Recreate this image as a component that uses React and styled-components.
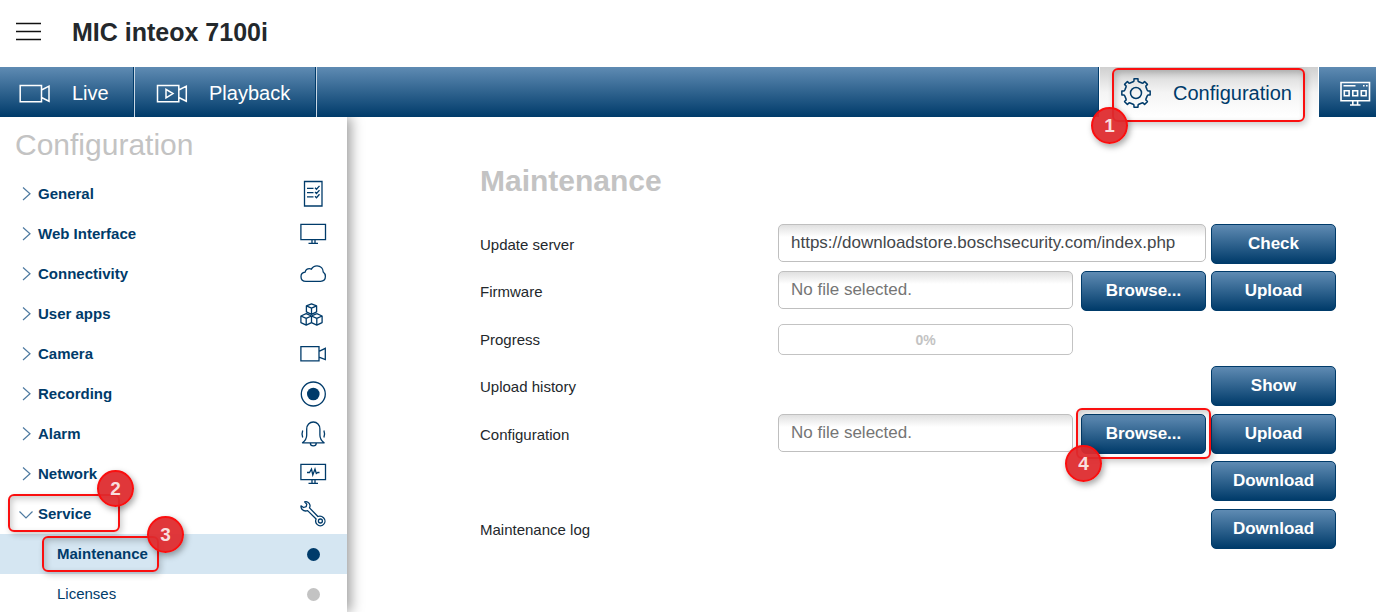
import React from "react";
import styled, { createGlobalStyle, css } from "styled-components";

const NAVY = "#003b6a";
const BLUE_FADE = "linear-gradient(#5f8bb3, #003b6a)";
const MUTED = "#c3c3c3";
const RED = "#fa0f0f";

const GlobalStyle = createGlobalStyle`
  *, *::before, *::after { box-sizing: border-box; }
  body {
    margin: 0;
    background: #fff;
    color: #23282c;
    font-family: "Liberation Sans", Arial, sans-serif;
    font-size: 15px;
  }
  button, input { font-family: inherit; }
`;

const Page = styled.div`
  display: flex;
  flex-direction: column;
  height: 100vh;
  overflow: hidden;
`;

const Header = styled.header`
  flex: none;
  display: flex;
  align-items: center;
  gap: 29px;
  height: 67px;
  padding: 0 15px 3px;
`;

const MenuToggle = styled.button`
  display: flex;
  padding: 0;
  border: 0;
  background: none;
  color: #111;
`;

const DeviceName = styled.h1`
  margin: 0;
  font-size: 25px;
  line-height: 30px;
`;

const NavBar = styled.nav`
  position: relative;
  z-index: 2;
  flex: none;
  display: flex;
  height: 50px;
  background: ${BLUE_FADE};
`;

const Tab = styled.a`
  position: relative;
  flex: none;
  display: flex;
  align-items: center;
  gap: 21px;
  width: ${(p) => p.$width}px;
  padding-left: ${(p) => p.$start}px;
  color: #fff;
  font-size: 20px;
  line-height: 24px;
  text-decoration: none;
  ${(p) =>
    p.$divider &&
    css`
      border-right: 1px solid #c9d8e6;
      box-shadow: inset -1px 0 ${NAVY};
    `}
  ${(p) =>
    p.$active &&
    css`
      background: linear-gradient(#d0d0d0, #f4f4f4 50%, #fff);
      border-left: 1px solid #fff;
      border-right: 1px solid #fff;
      color: ${NAVY};
    `}
`;

const TabText = styled.span`
  padding-top: 2px;
`;

const NavFill = styled.div`
  flex: 1;
  box-shadow: inset -1px 0 ${NAVY};
`;

const Body = styled.div`
  flex: 1;
  display: flex;
  min-height: 0;
`;

const Sidebar = styled.aside`
  position: relative;
  z-index: 1;
  flex: none;
  width: 347px;
  background: #fff;
  box-shadow: 4px 0 12px rgba(0, 0, 0, 0.38);
`;

const SidebarTitle = styled.h2`
  margin: 0;
  padding: 10px 15px 11px;
  color: ${MUTED};
  font-size: 30px;
  font-weight: 400;
  line-height: 36px;
`;

const Menu = styled.ul`
  margin: 0;
  padding: 0;
  list-style: none;
`;

const MenuItem = styled.li`
  position: relative;
`;

const rowStyle = css`
  display: flex;
  align-items: center;
  width: 100%;
  height: 40px;
  border: 0;
  color: ${NAVY};
  font-size: 15px;
  line-height: 20px;
  text-align: left;
  text-decoration: none;
`;

const SectionButton = styled.button`
  ${rowStyle}
  gap: 5px;
  padding: 0 20px 0 19px;
  background: none;
  font-weight: 700;
`;

const PageLink = styled.a`
  ${rowStyle}
  padding: 0 27px 0 57px;
  background: ${(p) => (p.$current ? "#d5e6f2" : "transparent")};
  font-weight: ${(p) => (p.$current ? 700 : 400)};
`;

const RowText = styled.span`
  flex: 1;
`;

const Dot = styled.span`
  width: 13px;
  height: 13px;
  border-radius: 50%;
  background: ${(p) => (p.$current ? NAVY : MUTED)};
`;

const Main = styled.main`
  flex: 1;
  min-width: 0;
  padding: 46px 40px 0 133px;
`;

const PageTitle = styled.h2`
  margin: 0 0 25px;
  color: ${MUTED};
  font-size: 30px;
  line-height: 36px;
`;

const Form = styled.form`
  display: flex;
  flex-direction: column;
`;

const FormRow = styled.div`
  display: grid;
  grid-template-columns: 298px minmax(0, 1fr) 125px;
  align-items: center;
  height: 40px;
  margin-bottom: 7px;
  &:nth-child(even) {
    margin-bottom: 8px;
  }
`;

const Label = styled.label`
  grid-column: 1;
  padding-top: 2px;
  line-height: 20px;
`;

const FieldGroup = styled.div`
  grid-column: 2;
  align-self: stretch;
  display: flex;
  align-items: flex-start;
  gap: 8px;
  padding-right: 5px;
`;

const TextInput = styled.input`
  flex: 1;
  min-width: 0;
  height: 38px;
  padding: 0 12px 1px;
  border: 1px solid #bfbfbf;
  border-radius: 5px;
  background: linear-gradient(#e0e0e0, #fff 12px);
  color: #43474b;
  font-size: 17px;
  &::placeholder {
    color: #757575;
    opacity: 1;
  }
`;

const ProgressTrack = styled.div`
  flex: 1;
  align-self: center;
  height: 31px;
  margin-right: 133px;
  border: 1px solid ${MUTED};
  border-radius: 5px;
  color: ${MUTED};
  font-size: 14px;
  font-weight: 700;
  line-height: 31px;
  text-align: center;
`;

const ActionButton = styled.button`
  width: 125px;
  height: 40px;
  padding: 0 0 1px;
  border: 1px solid ${NAVY};
  border-radius: 5px;
  background: ${BLUE_FADE};
  color: #fff;
  font-size: 17px;
  font-weight: 700;
`;

const ActionCell = styled.div`
  grid-column: 3;
`;

const Anchor = styled.div`
  position: relative;
  flex: none;
`;

const CalloutFrame = styled.span`
  position: absolute;
  z-index: 3;
  left: ${(p) => p.$left}px;
  top: ${(p) => p.$top}px;
  width: ${(p) => p.$width}px;
  height: ${(p) => p.$height}px;
  border: 2px solid ${RED};
  border-radius: 6px;
  box-shadow: 2px 3px 6px rgba(0, 0, 0, 0.2), inset 2px 3px 6px rgba(0, 0, 0, 0.2);
  pointer-events: none;
`;

const CalloutBadge = styled.span`
  position: absolute;
  left: ${(p) => p.$x}px;
  top: ${(p) => p.$y}px;
  width: 37px;
  height: 37px;
  border: 2px solid ${RED};
  border-radius: 50%;
  background: rgba(222, 42, 46, 0.94);
  box-shadow: 2px 3px 6px rgba(0, 0, 0, 0.35);
  color: #f9dede;
  font-size: 19px;
  font-weight: 700;
  line-height: 33px;
  text-align: center;
`;

function Callout({ number, box, badge }) {
  const [left, top, width, height] = box;
  return (
    <CalloutFrame $left={left} $top={top} $width={width} $height={height}>
      <CalloutBadge $x={badge[0]} $y={badge[1]}>
        {number}
      </CalloutBadge>
    </CalloutFrame>
  );
}

function Icon({ size = 28, width = 1.3, children }) {
  return (
    <svg
      width={size}
      height={size}
      viewBox={`0 0 ${size} ${size}`}
      fill="none"
      stroke="currentColor"
      strokeWidth={width}
      aria-hidden="true"
    >
      {children}
    </svg>
  );
}

function gearPath(cx, cy) {
  const points = [];
  for (let i = 0; i < 8; i += 1) {
    [
      [-14.5, 11.6],
      [-10, 12],
      [-8, 14.3],
      [8, 14.3],
      [10, 12],
      [14.5, 11.6],
    ].forEach(([offset, radius]) => {
      const a = ((i * 45 + offset - 90) * Math.PI) / 180;
      points.push(`${(cx + radius * Math.cos(a)).toFixed(2)} ${(cy + radius * Math.sin(a)).toFixed(2)}`);
    });
  }
  return `M${points.join("L")}Z`;
}

const GearIcon = () => (
  <Icon size={32} width={1.5}>
    <path d={gearPath(16, 17)} strokeLinejoin="round" />
    <circle cx="16" cy="17" r="5.5" />
  </Icon>
);

const LiveIcon = () => (
  <Icon size={32} width={1.5}>
    <path d="M1.2 9.5h21.3v16.3H1.2zM22.5 14l7.5-3.8v15L22.5 21.5" />
  </Icon>
);

const PlaybackIcon = () => (
  <Icon size={32} width={1.5}>
    <path d="M1.5 9.5h21.3v16.3H1.5zM22.8 14l7.5-3.8v15L22.8 21.5M10 13.3v8.6l7-4.3z" />
  </Icon>
);

const DashboardIcon = () => (
  <Icon size={32} width={1.6}>
    <path d="M2 6.5h28.5v18.3H2zM4.5 9.8h12M24 9.8h1.6M27 9.8h1.6M5.3 14.8h4.8v5H5.3zM13.8 14.8h4.8v5h-4.8zM22.3 14.8h4.8v5h-4.8zM13.8 25v3.5M18.6 25v3.5M11 29h10.5" />
  </Icon>
);

const ICONS = {
  list: (
    <>
      <path d="M5.5 1.5h17.5v24.5H5.5z" />
      <path d="M8 8.4h6.500M8 12.600h6.500M8 16.800h6.500M16 7.800l1.500 1.500 3-3.400M16 12l1.500 1.500 3-3.400M16 16.200l1.500 1.500 3-3.400" />
    </>
  ),
  monitor: <path d="M1.900 4.300h24.600v15.400H1.900zM13 20v3M16 20v3M9.500 23.300h9.500" />,
  cloud: (
    <path d="M7 21.300C3.800 21.300 2 19.300 2 16.700c0-2.300 1.800-4.200 4.100-4.500C6.600 9.900 8.300 8.600 10.400 8.600c.8 0 1.400.2 2 .5C13.500 7 15.600 5.800 18 5.800c3.700 0 6.300 2.700 6.200 6.200 1.400 1 2.200 2.500 2.200 4.300 0 3-2 5-4.800 5z" />
  ),
  cubes: (
    <path
      strokeLinejoin="round"
      d="M12.500 3.800l5.100 2.100v6l-5.100 2.400-5.100-2.400v-6zM7.400 5.900l5.100 2.300 5.100-2.300M12.500 8.200v6M7.200 13.700l5.300 2.300v6.600l-5.300 2.600-5.300-2.600V16zM1.900 16l5.300 2.400 5.300-2.400M7.200 18.400v6.800M17.800 13.700l5.300 2.300v6.600l-5.300 2.600-5.300-2.600M12.500 16l5.300-2.300M12.500 16l5.300 2.400 5.300-2.400M17.800 18.400v6.800"
    />
  ),
  camera: <path d="M1.900 6.700h18.100v14.200H1.900zM20 11.400l6.300-3v11.200l-6.300-2.500" />,
  record: (
    <>
      <circle cx="14.300" cy="14" r="12" />
      <circle cx="14.300" cy="14" r="6.300" fill="currentColor" stroke="none" />
    </>
  ),
  bell: (
    <path
      strokeLinejoin="round"
      d="M3.500 22.800c2.600-2 4.200-4.500 4.200-7.800V9c0-4 2.800-7 6.600-7s6.600 3 6.600 7v6c0 3.300 1.600 5.800 4.200 7.800zM11.300 23c0 1.700 1.300 2.900 3 2.900s3-1.200 3-2.900M3.700 10.600c-.9 2.300-.9 4.600 0 7M24.900 10.600c.9 2.300.9 4.600 0 7"
    />
  ),
  network: (
    <path d="M1.900 4.300h24.600v15.400H1.900zM13 20v3M16 20v3M9.500 23.300h9.500M8 12.500h2.500l2-3.500 1.300 6 2.200-6 1.300 4.500 1.500-1h1.700" />
  ),
  wrench: (
    <>
      <path
        strokeLinejoin="round"
        d="M5.600 1.900c2.400-.7 4.700.6 5.300 2.900.3 1.200.1 2.100-.4 3.100l8.400 8.600c1.900-.7 4.100-.3 5.600 1.200 1.900 1.900 1.900 4.900.1 6.700s-4.700 1.800-6.500 0c-1.500-1.500-1.800-3.600-1-5.400L8.600 10.600c-2 .7-4 .3-5.400-1.100-1-1-1.400-2.300-1.200-3.600l2.600 1.600 2.600-.8.600-2.500z"
      />
      <circle cx="21.400" cy="21" r="2" />
    </>
  ),
};

const ChevronRight = () => (
  <svg width="14" height="14" viewBox="0 0 14 14" fill="none" stroke="#4f7ba1" strokeWidth="1.200" aria-hidden="true">
    <path d="M4 .5l7 6.200-7 6.300" />
  </svg>
);

const ChevronDown = () => (
  <svg width="14" height="14" viewBox="0 0 14 14" fill="none" stroke="#4f7ba1" strokeWidth="1.200" aria-hidden="true">
    <path d="M.5 4.500L7 11l6.500-6.500" />
  </svg>
);

const SECTIONS = [
  { name: "General", icon: "list" },
  { name: "Web Interface", icon: "monitor" },
  { name: "Connectivity", icon: "cloud" },
  { name: "User apps", icon: "cubes" },
  { name: "Camera", icon: "camera" },
  { name: "Recording", icon: "record" },
  { name: "Alarm", icon: "bell" },
  { name: "Network", icon: "network" },
  {
    name: "Service",
    icon: "wrench",
    callout: { number: 2, box: [8, 0, 112, 38], badge: [87, -26] },
    pages: [
      {
        name: "Maintenance",
        current: true,
        callout: { number: 3, box: [42, 2, 117, 36], badge: [103, -22] },
      },
      { name: "Licenses" },
    ],
  },
];

function Section({ section }) {
  const open = Boolean(section.pages);
  return (
    <MenuItem>
      <SectionButton type="button" aria-expanded={open}>
        {open ? <ChevronDown /> : <ChevronRight />}
        <RowText>{section.name}</RowText>
        <Icon>{ICONS[section.icon]}</Icon>
      </SectionButton>
      {section.callout && <Callout {...section.callout} />}
      {open && (
        <Menu>
          {section.pages.map((page) => (
            <MenuItem key={page.name}>
              <PageLink href="#" $current={page.current} aria-current={page.current ? "page" : undefined}>
                <RowText>{page.name}</RowText>
                <Dot $current={page.current} />
              </PageLink>
              {page.callout && <Callout {...page.callout} />}
            </MenuItem>
          ))}
        </Menu>
      )}
    </MenuItem>
  );
}

function FileField({ id, callout }) {
  return (
    <FieldGroup>
      <TextInput id={id} type="text" placeholder="No file selected." readOnly />
      <Anchor>
        <ActionButton type="button">Browse...</ActionButton>
        {callout && <Callout {...callout} />}
      </Anchor>
    </FieldGroup>
  );
}

function Action({ id, children }) {
  return (
    <ActionCell>
      <ActionButton id={id} type="button">
        {children}
      </ActionButton>
    </ActionCell>
  );
}

export default function App() {
  return (
    <Page>
      <GlobalStyle />
      <Header>
        <MenuToggle type="button" aria-label="Menu">
          <Icon size={28} width={1.6}>
            <path d="M1 5.500h25M1 13.500h25M1 21.500h25" />
          </Icon>
        </MenuToggle>
        <DeviceName>MIC inteox 7100i</DeviceName>
      </Header>
      <NavBar>
        <Tab href="#" $width={135} $start={19} $divider>
          <LiveIcon />
          <TabText>Live</TabText>
        </Tab>
        <Tab href="#" $width={182} $start={21} $divider>
          <PlaybackIcon />
          <TabText>Playback</TabText>
        </Tab>
        <NavFill />
        <Tab href="#" $width={220} $start={20} $active aria-current="page">
          <GearIcon />
          <TabText>Configuration</TabText>
          <Callout number={1} box={[12, 1, 193, 54]} badge={[-23, 37]} />
        </Tab>
        <Tab href="#" $width={57} $start={20} aria-label="Dashboard">
          <DashboardIcon />
        </Tab>
      </NavBar>
      <Body>
        <Sidebar>
          <SidebarTitle>Configuration</SidebarTitle>
          <Menu>
            {SECTIONS.map((section) => (
              <Section key={section.name} section={section} />
            ))}
          </Menu>
        </Sidebar>
        <Main>
          <PageTitle>Maintenance</PageTitle>
          <Form>
            <FormRow>
              <Label htmlFor="server">Update server</Label>
              <FieldGroup>
                <TextInput
                  id="server"
                  type="text"
                  defaultValue="https://downloadstore.boschsecurity.com/index.php"
                />
              </FieldGroup>
              <Action>Check</Action>
            </FormRow>
            <FormRow>
              <Label htmlFor="firmware">Firmware</Label>
              <FileField id="firmware" />
              <Action>Upload</Action>
            </FormRow>
            <FormRow>
              <Label as="span" id="progress-label">
                Progress
              </Label>
              <FieldGroup>
                <ProgressTrack role="progressbar" aria-valuenow={0} aria-labelledby="progress-label">
                  0%
                </ProgressTrack>
              </FieldGroup>
            </FormRow>
            <FormRow>
              <Label htmlFor="history">Upload history</Label>
              <Action id="history">Show</Action>
            </FormRow>
            <FormRow>
              <Label htmlFor="config">Configuration</Label>
              <FileField
                id="config"
                callout={{ number: 4, box: [-5, -6, 135, 51], badge: [-13, 35] }}
              />
              <Action>Upload</Action>
            </FormRow>
            <FormRow>
              <Action>Download</Action>
            </FormRow>
            <FormRow>
              <Label htmlFor="log">Maintenance log</Label>
              <Action id="log">Download</Action>
            </FormRow>
          </Form>
        </Main>
      </Body>
    </Page>
  );
}
